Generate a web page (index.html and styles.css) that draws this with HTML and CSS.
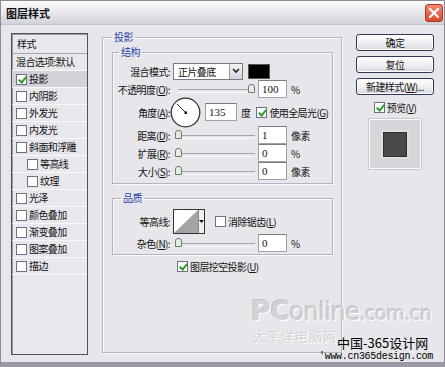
FILE: index.html
```html
<!DOCTYPE html>
<html lang="zh-CN">
<head>
  <meta charset="UTF-8">
  <title>图层样式</title>
  <link rel="stylesheet" href="styles.css">
</head>
<body>
<div class="window">
  <div class="titlebar">
    <span class="title">图层样式</span>
    <span class="close">
      <svg width="12" height="12" viewBox="0 0 12 12"><path d="M2 2 L10 10 M10 2 L2 10" stroke="#fff" stroke-width="2.2" stroke-linecap="round"/></svg>
    </span>
  </div>

  <div class="body">
    <!-- 样式列表 -->
    <div class="styles-list">
      <div class="list-head">样式</div>
      <div class="item">混合选项:默认</div>
      <div class="item selected"><span class="cb checked"></span>投影</div>
      <div class="item"><span class="cb"></span>内阴影</div>
      <div class="item"><span class="cb"></span>外发光</div>
      <div class="item"><span class="cb"></span>内发光</div>
      <div class="item"><span class="cb"></span>斜面和浮雕</div>
      <div class="item sub"><span class="cb"></span>等高线</div>
      <div class="item sub"><span class="cb"></span>纹理</div>
      <div class="item"><span class="cb"></span>光泽</div>
      <div class="item"><span class="cb"></span>颜色叠加</div>
      <div class="item"><span class="cb"></span>渐变叠加</div>
      <div class="item"><span class="cb"></span>图案叠加</div>
      <div class="item"><span class="cb"></span>描边</div>
    </div>

    <!-- 投影设置 -->
    <fieldset class="group outer">
      <legend>投影</legend>

      <fieldset class="group inner">
        <legend>结构</legend>
        <div class="row">
          <span class="lbl">混合模式:</span>
          <span class="select"><span class="select-text">正片叠底</span><span class="select-btn"><svg width="8" height="6" viewBox="0 0 8 6"><path d="M1 1 L4 4 L7 1" fill="none" stroke="#222" stroke-width="1.6"/></svg></span></span>
          <span class="swatch"></span>
        </div>
        <div class="row">
          <span class="lbl">不透明度(<u>O</u>):</span>
          <span class="slider right"><span class="thumb"></span></span>
          <span class="field">100</span>
          <span class="unit">%</span>
        </div>
        <div class="row tall">
          <span class="lbl">角度(<u>A</u>):</span>
          <svg class="dial" width="31" height="31" viewBox="0 0 31 31">
            <circle cx="15.5" cy="15.5" r="14.3" fill="#fff" stroke="#333" stroke-width="1.3"/>
            <path d="M15.5 15.5 L7 7" stroke="#222" stroke-width="1"/>
            <rect x="14.5" y="14.5" width="2.5" height="2.5" fill="#111"/>
          </svg>
          <span class="field angle">135</span>
          <span class="unit">度</span>
          <span class="check global"><span class="cb checked"></span>使用全局光(<u>G</u>)</span>
        </div>
        <div class="row">
          <span class="lbl">距离(<u>D</u>):</span>
          <span class="slider"><span class="thumb"></span></span>
          <span class="field">1</span>
          <span class="unit">像素</span>
        </div>
        <div class="row">
          <span class="lbl">扩展(<u>R</u>):</span>
          <span class="slider"><span class="thumb"></span></span>
          <span class="field">0</span>
          <span class="unit">%</span>
        </div>
        <div class="row">
          <span class="lbl">大小(<u>S</u>):</span>
          <span class="slider"><span class="thumb"></span></span>
          <span class="field">0</span>
          <span class="unit">像素</span>
        </div>
      </fieldset>

      <fieldset class="group inner quality">
        <legend>品质</legend>
        <div class="row contour-row">
          <span class="lbl">等高线:</span>
          <span class="contour">
            <svg width="24" height="23" viewBox="0 0 24 23"><path d="M0 23 L24 0 L24 23 Z" fill="#a4a4a4"/></svg>
            <span class="contour-btn"><svg width="5" height="3" viewBox="0 0 5 3"><path d="M0 0 L5 0 L2.5 3 Z" fill="#111"/></svg></span>
          </span>
          <span class="check antialias"><span class="cb"></span>消除锯齿(<u>L</u>)</span>
        </div>
        <div class="row">
          <span class="lbl">杂色(<u>N</u>):</span>
          <span class="slider"><span class="thumb"></span></span>
          <span class="field">0</span>
          <span class="unit">%</span>
        </div>
      </fieldset>

      <div class="check knockout"><span class="cb checked"></span>图层挖空投影(<u>U</u>)</div>
    </fieldset>

    <!-- 按钮 -->
    <div class="side">
      <div class="btn">确定</div>
      <div class="btn">复位</div>
      <div class="btn">新建样式(<u>W</u>)...</div>
      <div class="check preview-check"><span class="cb checked"></span>预览(<u>V</u>)</div>
      <div class="preview"><span class="preview-square"></span></div>
    </div>
  </div>

  <div class="watermark">
    <div class="wm-brand"><span class="wm-pc">PC</span>online<span class="wm-dom">.com.cn</span></div>
    <div class="wm-cn">太平洋电脑网</div>
    <div class="wm-site">中国-365设计网</div>
    <div class="wm-url">'www.cn365design.com</div>
  </div>
</div>
</body>
</html>
```

FILE: styles.css
```css
* {
  box-sizing: border-box;
}

body {
  margin: 0;
  background: #e7e7eb;
  font-family: "Noto Sans CJK SC", "DejaVu Sans", sans-serif;
  font-size: 10px;
  letter-spacing: -0.6px;
  color: #111;
}

u {
  text-decoration: underline;
}

.window {
  position: relative;
  width: 445px;
  height: 367px;
  background: #e7e7eb;
  border: 1px solid #8c8c96;
  border-bottom: 5px solid #9a9aa4;
  overflow: hidden;
}

.titlebar {
  height: 24px;
  display: flex;
  align-items: center;
  justify-content: space-between;
  padding: 0 1px 0 5px;
  background: linear-gradient(#fbfbfc, #e4e4ea 60%, #d2d2da);
  border-bottom: 1px solid #c4c4cc;
}

.title {
  font-size: 11px;
  font-weight: bold;
  line-height: 14px;
  letter-spacing: 0;
  color: #101010;
}

.close {
  width: 18px;
  height: 18px;
  display: flex;
  align-items: center;
  justify-content: center;
  border-radius: 3px;
  border: 1px solid #a83a2a;
  background: linear-gradient(#f08a6e, #d84a30);
}

.body {
  display: flex;
  align-items: flex-start;
  padding: 5px 0 0 10px;
}

/* 样式列表 */
.styles-list {
  width: 77px;
  height: 322px;
  margin-top: 3px;
  border: 1px solid #505058;
  box-shadow: inset 1px 1px 0 #9a9aa2;
  background: #e8e8ec;
}

.list-head {
  height: 20px;
  line-height: 19px;
  padding-left: 5px;
  border-bottom: 1px solid #a6a6ae;
}

.item {
  height: 17px;
  display: flex;
  align-items: center;
  padding-left: 4px;
  border-bottom: 1px solid #f8f8fa;
  line-height: 16px;
  white-space: nowrap;
}

.item.selected {
  background: #d2d2d8;
}

.item.sub {
  padding-left: 15px;
}

.cb {
  position: relative;
  display: inline-block;
  flex: none;
  width: 11px;
  height: 11px;
  margin-right: 2px;
  border: 1px solid #6c7284;
  background: #fff;
}

.cb.checked::after {
  content: "";
  position: absolute;
  left: 3px;
  top: 0px;
  width: 3px;
  height: 6px;
  border: solid #2c9a2c;
  border-width: 0 2px 2px 0;
  transform: rotate(40deg);
}

/* 分组框 */
.group {
  margin: 0;
  border: 1px solid #b4b4bc;
  box-shadow: inset 1px 1px 0 #fafafc, 1px 1px 0 #fafafc;
}

.group legend {
  padding: 0 2px;
  margin-left: 6px;
  color: #1f3fa6;
  line-height: 14px;
}

.outer {
  width: 240px;
  height: 323px;
  margin-left: 14px;
  padding: 1px 8px 0 9px;
}

.outer > legend {
  margin-left: 0;
}

.inner {
  padding: 3px 0 3px 0;
}

.quality {
  margin-top: 7px;
  padding-bottom: 2px;
}

.quality > legend {
  margin-left: 8px;
}

.row {
  height: 18px;
  display: flex;
  align-items: center;
  white-space: nowrap;
}

.row.tall {
  height: 28px;
}

.lbl {
  width: 57px;
  flex: none;
  text-align: right;
  margin-right: 3px;
}

.select {
  display: flex;
  width: 70px;
  height: 17px;
  border: 1px solid #7a7a84;
  background: #fff;
}

.select-text {
  flex: 1;
  padding-left: 4px;
  line-height: 15px;
}

.select-btn {
  width: 13px;
  display: flex;
  align-items: center;
  justify-content: center;
  border-left: 1px solid #9a9aa4;
  background: linear-gradient(#f4f4f8, #d4d4dc);
}

.swatch {
  width: 22px;
  height: 15px;
  margin-left: 5px;
  background: #000;
  border: 1px solid #555;
}

.slider {
  position: relative;
  width: 80px;
  height: 10px;
  margin-left: 2px;
  margin-right: 3px;
}

.slider::before {
  content: "";
  position: absolute;
  left: 3px;
  right: 0;
  top: 5px;
  height: 2px;
  border-top: 1px solid #a4a4ac;
  border-bottom: 1px solid #fbfbfc;
}

.thumb {
  position: absolute;
  left: 0;
  top: 0;
  width: 7px;
  height: 9px;
  background: #e4eee0;
  border: 1px solid #6c7c6c;
  border-radius: 3px 3px 0 0;
}

.slider.right .thumb {
  left: auto;
  right: 0;
}

.field {
  width: 29px;
  height: 18px;
  flex: none;
  padding-left: 3px;
  line-height: 16px;
  border: 1px solid #a0a0a8;
  border-top-color: #7c7c84;
  background: #fff;
  font-family: "Liberation Serif", serif;
  font-size: 11px;
  letter-spacing: 0;
}

.field.angle {
  width: 32px;
  margin-left: 4px;
}

.unit {
  margin-left: 4px;
}

.dial {
  margin-left: -3px;
}

.check {
  display: flex;
  align-items: center;
  white-space: nowrap;
}

.global {
  margin-left: 6px;
}

.contour-row {
  height: 26px;
}

.contour {
  display: flex;
  width: 32px;
  height: 25px;
  border: 1px solid #333;
  background: #fff;
}

.contour-btn {
  width: 6px;
  display: flex;
  align-items: center;
  justify-content: center;
  border-left: 1px solid #888;
  background: #f0f0f2;
}

.antialias {
  margin-left: 10px;
}

.knockout {
  height: 18px;
  margin: 2px 0 0 65px;
}

/* 右侧按钮 */
.side {
  width: 78px;
  margin: 4px 0 0 14px;
  display: flex;
  flex-direction: column;
  align-items: center;
}

.btn {
  width: 78px;
  height: 17px;
  margin-bottom: 5px;
  text-align: center;
  line-height: 15px;
  border: 1px solid #2e3a58;
  border-radius: 3px;
  background: linear-gradient(#ffffff, #ececf0 60%, #d6d6de);
  box-shadow: inset 0 0 0 1px #fff;
}

.preview-check {
  height: 14px;
}

.preview {
  width: 52px;
  height: 50px;
  margin-top: 5px;
  display: flex;
  align-items: center;
  justify-content: center;
  background: #d6d6da;
  border: 1px solid #fafafc;
  box-shadow: 0 0 0 1px #c8c8cc;
}

.preview-square {
  width: 24px;
  height: 25px;
  background: #4a4a4a;
  border: 1px solid #2e2e2e;
  box-shadow: 0 0 0 2px #e0e0e2;
}

/* 水印 */
.watermark {
  position: absolute;
  left: 250px;
  top: 296px;
  width: 195px;
  height: 70px;
}

.wm-brand {
  font-family: "DejaVu Sans", sans-serif;
  font-size: 24px;
  line-height: 28px;
  color: #d2d2d6;
  text-shadow: 1px 1px 0 #fff, -1px -1px 0 #c2c2c8;
  letter-spacing: -0.5px;
}

.wm-pc {
  font-size: 27px;
  font-weight: bold;
}

.wm-dom {
  font-size: 19px;
}

.wm-cn {
  font-size: 13px;
  line-height: 18px;
  letter-spacing: 1px;
  color: #d2d2d6;
  text-shadow: 1px 1px 0 #fff;
  margin-left: 2px;
}

.wm-site {
  position: absolute;
  left: 86px;
  top: 38px;
  font-size: 13px;
  line-height: 16px;
  letter-spacing: 0;
  color: #000;
}

.wm-url {
  position: absolute;
  left: 68px;
  top: 54px;
  font-family: "Liberation Mono", monospace;
  font-size: 10px;
  line-height: 12px;
  color: #000;
  letter-spacing: -0.3px;
}
```
